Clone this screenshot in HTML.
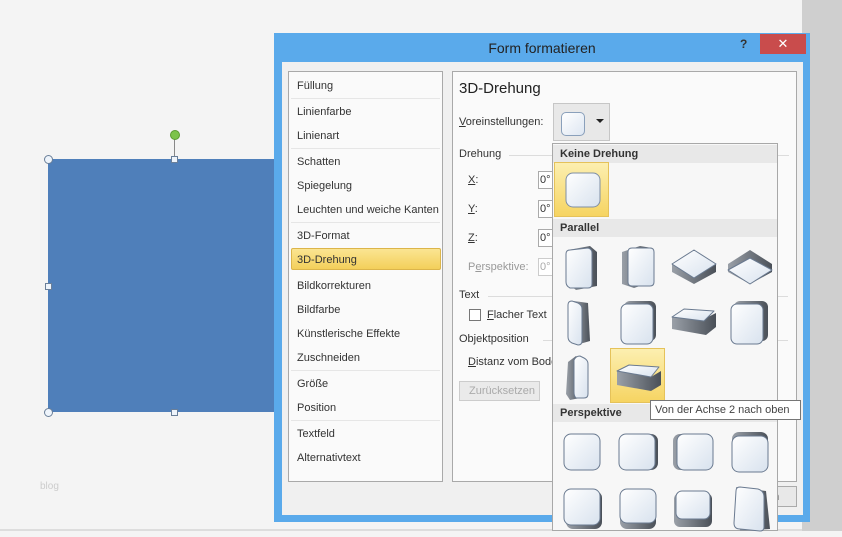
<!DOCTYPE html>
<html><head><meta charset="utf-8"><style>
*{margin:0;padding:0;box-sizing:border-box}
body{width:842px;height:531px;overflow:hidden;background:#f4f4f4;font-family:"Liberation Sans",sans-serif;font-size:11px;color:#333;position:relative}
.abs{position:absolute}
.strip{left:802px;top:0;width:40px;height:531px;background:#cfcfcf}
.rect{left:48px;top:159px;width:228px;height:253px;background:#4f7fba}
.h{width:7px;height:7px;background:#eef4fb;border:1px solid #6a7f99}
.hc{width:9px;height:9px;border-radius:50%;background:#eef4fb;border:1px solid #6a7f99}
.dlg{left:274px;top:33px;width:536px;height:489px;background:#5aaaeb}
.inner{left:282px;top:62px;width:521px;height:453px;background:#f0f0f0}
.title{left:274px;top:40px;width:536px;text-align:center;font-size:14px;color:#222}
.close{left:760px;top:34px;width:46px;height:20px;background:#c94c4c;color:#fff;text-align:center;font-size:13px;line-height:20px}
.panel{background:#fafafa;border:1px solid #a9a9a9}
.li{position:absolute;left:8px;font-size:11px;color:#333}
.sep{position:absolute;left:2px;right:2px;height:1px;background:#e6e6e6}
.sel{position:absolute;left:2px;width:150px;height:22px;background:linear-gradient(#fbe592,#f3cf5a);border:1px solid #dcb54a;border-radius:2px}
.lbl{position:absolute;font-size:11px;color:#333}
.grp{position:absolute;height:1px;background:#dcdcdc}
.inp{position:absolute;width:16px;height:18px;border:1px solid #aaa;background:#fff;font-size:11px;padding:2px 1px}
.dd{left:552px;top:143px;width:226px;height:388px;background:#f7f7f7;border:1px solid #a8a8a8}
.hd{position:absolute;left:0;width:224px;height:18px;background:#e8e8e8;font-weight:bold;font-size:11px;padding:3px 7px;color:#333}
.cell{position:absolute;width:55px;height:55px}
.cell.on{background:linear-gradient(#fcefb0,#f6d462);border:1px solid #e5c25a}
.tip{left:650px;top:400px;width:151px;height:20px;background:#fff;border:1px solid #767676;font-size:11px;padding:3px 4px;color:#444}
</style></head><body>
<div class="abs strip"></div>
<div class="abs" style="left:0;top:529px;width:802px;height:2px;background:#ddd"></div>
<div class="abs rect"></div>
<div class="abs" style="left:174px;top:138px;width:1px;height:20px;background:#888"></div>
<div class="abs" style="left:170px;top:130px;width:10px;height:10px;border-radius:50%;background:#7cc34a;border:1px solid #5a9a30"></div>
<div class="abs hc" style="left:44px;top:155px"></div>
<div class="abs h" style="left:171px;top:156px"></div>
<div class="abs h" style="left:45px;top:283px"></div>
<div class="abs hc" style="left:44px;top:408px"></div>
<div class="abs h" style="left:171px;top:409px"></div>
<div class="abs" style="left:40px;top:481px;color:#ccc;font-size:10px">blog</div>

<div class="abs dlg"></div>
<div class="abs inner"></div>
<div class="abs title">Form formatieren</div>
<div class="abs" style="left:740px;top:37px;font-weight:bold;font-size:12px;color:#333">?</div>
<div class="abs close">✕</div>

<div class="abs panel" style="left:288px;top:71px;width:155px;height:411px">
<div class="li" style="top:8px">Füllung</div>
<div class="sep" style="top:26px"></div>
<div class="li" style="top:34px">Linienfarbe</div>
<div class="li" style="top:58px">Linienart</div>
<div class="sep" style="top:76px"></div>
<div class="li" style="top:84px">Schatten</div>
<div class="li" style="top:108px">Spiegelung</div>
<div class="li" style="top:132px">Leuchten und weiche Kanten</div>
<div class="sep" style="top:150px"></div>
<div class="li" style="top:158px">3D-Format</div>
<div class="sel" style="top:176px"></div>
<div class="li" style="top:182px">3D-Drehung</div>
<div class="li" style="top:208px">Bildkorrekturen</div>
<div class="li" style="top:232px">Bildfarbe</div>
<div class="li" style="top:256px">Künstlerische Effekte</div>
<div class="li" style="top:280px">Zuschneiden</div>
<div class="sep" style="top:298px"></div>
<div class="li" style="top:306px">Größe</div>
<div class="li" style="top:330px">Position</div>
<div class="sep" style="top:348px"></div>
<div class="li" style="top:356px">Textfeld</div>
<div class="li" style="top:380px">Alternativtext</div>
</div>

<div class="abs panel" style="left:452px;top:71px;width:345px;height:411px">
<div class="lbl" style="left:6px;top:8px;font-size:15px;color:#222">3D-Drehung</div>
<div class="lbl" style="left:6px;top:44px"><u>V</u>oreinstellungen:</div>
<div class="lbl" style="left:100px;top:31px;width:57px;height:38px;border:1px solid #c6c6c6;background:#e8e8e8">
<div style="position:absolute;left:7px;top:8px;width:24px;height:24px;border:1px solid #8aa0bb;border-radius:5px;background:linear-gradient(135deg,#fff,#dde6f2)"></div>
<div style="position:absolute;left:42px;top:15px;border-left:4px solid transparent;border-right:4px solid transparent;border-top:4px solid #222"></div></div>
<div class="lbl" style="left:6px;top:76px">Drehung</div><div class="grp" style="left:56px;top:83px;width:280px"></div>
<div class="lbl" style="left:15px;top:102px"><u>X</u>:</div><div class="inp" style="left:85px;top:99px">0°</div>
<div class="lbl" style="left:15px;top:131px"><u>Y</u>:</div><div class="inp" style="left:85px;top:128px">0°</div>
<div class="lbl" style="left:15px;top:160px"><u>Z</u>:</div><div class="inp" style="left:85px;top:157px">0°</div>
<div class="lbl" style="left:15px;top:189px;color:#999">P<u>e</u>rspektive:</div><div class="inp" style="left:85px;top:186px;color:#aaa;border-color:#ccc">0°</div>
<div class="lbl" style="left:6px;top:217px">Text</div><div class="grp" style="left:35px;top:224px;width:300px"></div>
<div class="lbl" style="left:16px;top:237px;width:12px;height:12px;border:1px solid #777;background:#fff"></div>
<div class="lbl" style="left:34px;top:237px"><u>F</u>lacher Text</div>
<div class="lbl" style="left:6px;top:261px">Objektposition</div><div class="grp" style="left:90px;top:268px;width:245px"></div>
<div class="lbl" style="left:15px;top:284px"><u>D</u>istanz vom Boden</div>
<div class="lbl" style="left:6px;top:309px;width:81px;height:20px;border:1px solid #ccc;background:#eaeaea;color:#aaa;padding:3px 9px">Zurücksetzen</div>
</div>
<div class="abs" style="left:760px;top:486px;width:37px;height:21px;border:1px solid #aaa;background:#e8e8e8;font-size:11px;padding:4px 12px">n</div>

<svg width="0" height="0" style="position:absolute">
<defs>
<linearGradient id="f" x1="0" y1="0" x2="1" y2="1"><stop offset="0" stop-color="#fff"/><stop offset="1" stop-color="#d8e2ee"/></linearGradient>
<linearGradient id="s" x1="0" y1="0" x2="1" y2="0"><stop offset="0" stop-color="#9aa0a8"/><stop offset="1" stop-color="#4a5058"/></linearGradient>
</defs></svg>

<div class="abs dd">
<div class="hd" style="top:1px">Keine Drehung</div>
<div class="cell on" style="left:1px;top:18px"><svg width="55" height="55"><rect x="11" y="10" width="34" height="34" rx="7" fill="url(#f)" stroke="#7f8fa5"/></svg></div>
<div class="hd" style="top:75px">Parallel</div>
<div class="cell" style="left:1px;top:94px"><svg width="55" height="55"><path d="M14 12 L36 8 L43 14 L43 48 L22 52 L12 44 Z" fill="url(#s)"/><path d="M12 16 Q12 12 16 12 L34 10 Q38 11 38 15 L38 46 Q38 50 34 50 L16 50 Q12 48 12 44Z" fill="url(#f)" stroke="#6a7a90"/></svg></div>
<div class="cell" style="left:57px;top:94px"><svg width="55" height="55"><path d="M12 14 L30 8 L42 10 L42 44 L24 50 L12 46Z" fill="url(#s)"/><path d="M18 14 Q18 10 22 10 L40 10 Q44 10 44 14 L44 44 Q44 48 40 48 L22 48 Q18 48 18 44Z" fill="url(#f)" stroke="#6a7a90"/></svg></div>
<div class="cell" style="left:113px;top:94px"><svg width="55" height="55"><path d="M6 26 L28 38 L50 26 L50 34 L28 46 L6 34Z" fill="url(#s)"/><path d="M6 26 L28 12 L50 26 L28 40Z" fill="url(#f)" stroke="#6a7a90" stroke-linejoin="round"/></svg></div>
<div class="cell" style="left:169px;top:94px"><svg width="55" height="55"><path d="M6 26 L28 12 L50 26 L50 34 L28 46 L6 34Z" fill="url(#s)"/><path d="M6 32 L28 20 L50 32 L28 46Z" fill="url(#f)" stroke="#6a7a90" stroke-linejoin="round"/></svg></div>
<div class="cell" style="left:1px;top:149px"><svg width="55" height="55"><path d="M20 8 L34 10 L36 48 L22 52Z" fill="url(#s)"/><path d="M14 12 Q14 8 18 8 L24 10 Q28 12 28 16 L28 48 Q28 52 24 52 L18 50 Q14 48 14 44Z" fill="url(#f)" stroke="#6a7a90"/></svg></div>
<div class="cell" style="left:57px;top:149px"><svg width="55" height="55"><rect x="14" y="8" width="32" height="40" rx="6" fill="url(#s)"/><rect x="11" y="11" width="32" height="40" rx="6" fill="url(#f)" stroke="#6a7a90"/></svg></div>
<div class="cell" style="left:113px;top:149px"><svg width="55" height="55"><path d="M6 24 L38 26 L50 20 L50 34 L40 42 L6 36Z" fill="url(#s)"/><path d="M6 24 L18 16 L48 18 L38 28Z" fill="url(#f)" stroke="#6a7a90" stroke-linejoin="round"/></svg></div>
<div class="cell" style="left:169px;top:149px"><svg width="55" height="55"><rect x="12" y="8" width="34" height="40" rx="6" fill="url(#s)"/><rect x="9" y="11" width="32" height="40" rx="6" fill="url(#f)" stroke="#6a7a90"/></svg></div>
<div class="cell" style="left:1px;top:204px"><svg width="55" height="55"><path d="M14 14 L22 8 L28 12 L26 50 L16 52 L12 46Z" fill="url(#s)"/><path d="M20 12 Q22 8 26 8 L30 10 Q34 12 34 16 L34 46 Q34 50 30 50 L22 50 Q20 48 20 44Z" fill="url(#f)" stroke="#6a7a90"/></svg></div>
<div class="cell on" style="left:57px;top:204px"><svg width="55" height="55"><path d="M6 22 L40 28 L50 22 L50 36 L40 42 L6 36Z" fill="url(#s)"/><path d="M6 22 L18 16 L48 18 L40 28Z" fill="url(#f)" stroke="#6a7a90" stroke-linejoin="round"/></svg></div>
<div class="hd" style="top:260px">Perspektive</div>
<div class="cell" style="left:1px;top:280px"><svg width="55" height="55"><rect x="10" y="10" width="36" height="36" rx="7" fill="url(#f)" stroke="#6a7a90"/></svg></div>
<div class="cell" style="left:57px;top:280px"><svg width="55" height="55"><rect x="12" y="10" width="36" height="36" rx="7" fill="url(#s)"/><rect x="9" y="10" width="36" height="36" rx="7" fill="url(#f)" stroke="#6a7a90"/></svg></div>
<div class="cell" style="left:113px;top:280px"><svg width="55" height="55"><rect x="7" y="10" width="36" height="36" rx="7" fill="url(#s)"/><rect x="11" y="10" width="36" height="36" rx="7" fill="url(#f)" stroke="#6a7a90"/></svg></div>
<div class="cell" style="left:169px;top:280px"><svg width="55" height="55"><rect x="10" y="8" width="36" height="36" rx="7" fill="url(#s)"/><rect x="10" y="12" width="36" height="36" rx="7" fill="url(#f)" stroke="#6a7a90"/></svg></div>
<div class="cell" style="left:1px;top:335px"><svg width="55" height="55"><rect x="12" y="12" width="36" height="38" rx="7" fill="url(#s)"/><rect x="10" y="10" width="36" height="36" rx="7" fill="url(#f)" stroke="#6a7a90"/></svg></div>
<div class="cell" style="left:57px;top:335px"><svg width="55" height="55"><rect x="10" y="14" width="36" height="36" rx="7" fill="url(#s)"/><rect x="10" y="10" width="36" height="34" rx="7" fill="url(#f)" stroke="#6a7a90"/></svg></div>
<div class="cell" style="left:113px;top:335px"><svg width="55" height="55"><rect x="8" y="14" width="38" height="34" rx="6" fill="url(#s)"/><rect x="10" y="12" width="34" height="28" rx="6" fill="url(#f)" stroke="#6a7a90"/></svg></div>
<div class="cell" style="left:169px;top:335px"><svg width="55" height="55"><path d="M14 8 L44 12 L48 50 L18 52Z" fill="url(#s)"/><path d="M14 12 Q14 8 18 8 L36 10 Q42 12 42 18 L42 48 Q42 52 38 52 L18 50 Q12 50 12 44Z" fill="url(#f)" stroke="#6a7a90"/></svg></div>
</div>
<div class="abs tip">Von der Achse 2 nach oben</div>
</body></html>
